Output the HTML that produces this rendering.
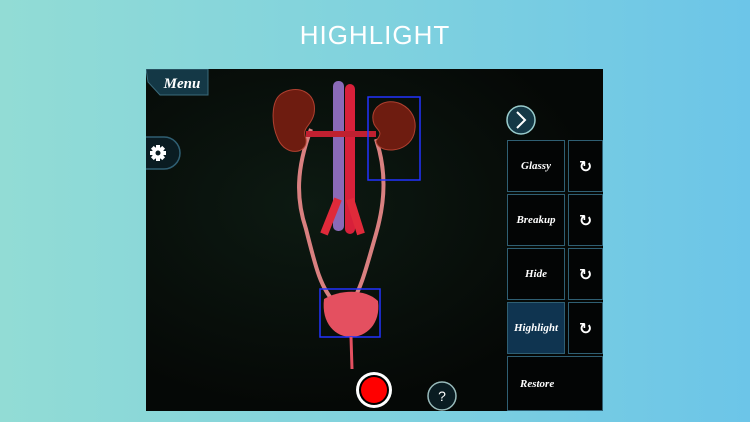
<!DOCTYPE html>
<html><head><style>
body{margin:0;width:750px;height:422px;overflow:hidden;background:linear-gradient(90deg,#92dcd5,#80d2de 50%,#6cc5e8);font-family:"Liberation Sans",sans-serif;position:relative}
.t{position:absolute;top:20px;width:750px;text-align:center;color:#fff;font-size:26px;letter-spacing:1px;font-weight:300}
.s{position:absolute;left:146px;top:69px;width:457px;height:342px;background:radial-gradient(ellipse at 35% 40%,#0d1a12,#050806 70%);overflow:hidden}
.b{position:absolute;border:1px solid #2f5f73;background:#030505;color:#fff;font:italic bold 11px "Liberation Serif",serif;display:flex;align-items:center;justify-content:center;box-sizing:border-box}
.r{font:bold 16px "DejaVu Sans",sans-serif}
</style></head><body>
<div class="t">HIGHLIGHT</div>
<div class="s">
<svg width="457" height="342" style="position:absolute;left:0;top:0">
<path d="M0 0 H62 V26 H14 L2 13 Z" fill="#143846" stroke="#3a6a7a"/>
<text x="36" y="19" fill="#fff" font-family="Liberation Serif" font-style="italic" font-weight="bold" font-size="15" text-anchor="middle">Menu</text>
<path d="M0 68 H18 A16 16 0 0 1 18 100 H0" fill="#0a1c22" stroke="#2f5f73" stroke-width="1.5"/>
<g transform="translate(12 84)" fill="#fff">
<rect x="-2" y="-8" width="4" height="16"/><rect x="-2" y="-8" width="4" height="16" transform="rotate(45)"/><rect x="-2" y="-8" width="4" height="16" transform="rotate(90)"/><rect x="-2" y="-8" width="4" height="16" transform="rotate(135)"/>
<circle r="6"/><circle r="2.5" fill="#0a1c22"/></g>
<!-- ureters -->
<path d="M165 60 C150 100 150 130 160 160 C170 200 175 220 190 235" fill="none" stroke="#d98080" stroke-width="4"/>
<path d="M230 70 C240 100 240 130 230 165 C220 200 215 220 205 235" fill="none" stroke="#d98080" stroke-width="4"/>
<!-- vessels -->
<rect x="187" y="12" width="11" height="150" rx="5" fill="#8a6ab8"/>
<rect x="199" y="15" width="10" height="150" rx="5" fill="#d8203a"/>
<path d="M192 130 L178 165 M204 130 L215 165" stroke="#e02a3a" stroke-width="8" fill="none"/>
<path d="M160 65 H230" stroke="#c02030" stroke-width="6"/>
<!-- kidneys -->
<path d="M135 25 C150 15 172 22 168 45 C165 58 155 58 160 70 C162 85 140 88 132 70 C125 55 125 32 135 25Z" fill="#6e1c10" stroke="#b04030"/>
<path d="M255 35 C240 28 222 38 228 55 C232 63 238 62 230 72 C232 85 262 85 268 65 C272 50 265 40 255 35Z" fill="#6e1c10" stroke="#b04030"/>
<rect x="222" y="28" width="52" height="83" fill="none" stroke="#2233ff" stroke-width="1.5"/>
<!-- bladder -->
<path d="M178 230 C195 220 220 220 232 232 C235 255 220 268 205 268 C190 268 175 255 178 230Z" fill="#e45060"/>
<rect x="174" y="220" width="60" height="48" fill="none" stroke="#2233ff" stroke-width="1.5"/>
<path d="M205 268 L206 300" stroke="#e45060" stroke-width="3"/>
<circle cx="228" cy="321" r="18" fill="#fff"/><circle cx="228" cy="321" r="15" fill="#000"/><circle cx="228" cy="321" r="13" fill="#f00"/>
<circle cx="296" cy="327" r="14" fill="#0a1c22" stroke="#9bb" stroke-width="1.5"/>
<text x="296" y="332" fill="#fff" font-size="14" text-anchor="middle" font-family="Liberation Sans">?</text>
<circle cx="375" cy="51" r="14" fill="#143846" stroke="#9cc" stroke-width="1.5"/>
<path d="M371 43 L379 51 L371 59" fill="none" stroke="#fff" stroke-width="2"/>
</svg>
<div class="b" style="left:361px;top:71px;width:58px;height:52px">Glassy</div>
<div class="b r" style="left:422px;top:71px;width:35px;height:52px">↻</div>
<div class="b" style="left:361px;top:125px;width:58px;height:52px">Breakup</div>
<div class="b r" style="left:422px;top:125px;width:35px;height:52px">↻</div>
<div class="b" style="left:361px;top:179px;width:58px;height:52px">Hide</div>
<div class="b r" style="left:422px;top:179px;width:35px;height:52px">↻</div>
<div class="b" style="left:361px;top:233px;width:58px;height:52px;background:#0f3450">Highlight</div>
<div class="b r" style="left:422px;top:233px;width:35px;height:52px">↻</div>
<div class="b" style="left:361px;top:287px;width:96px;height:55px;justify-content:flex-start;padding-left:12px">Restore</div>
</div>
</body></html>
